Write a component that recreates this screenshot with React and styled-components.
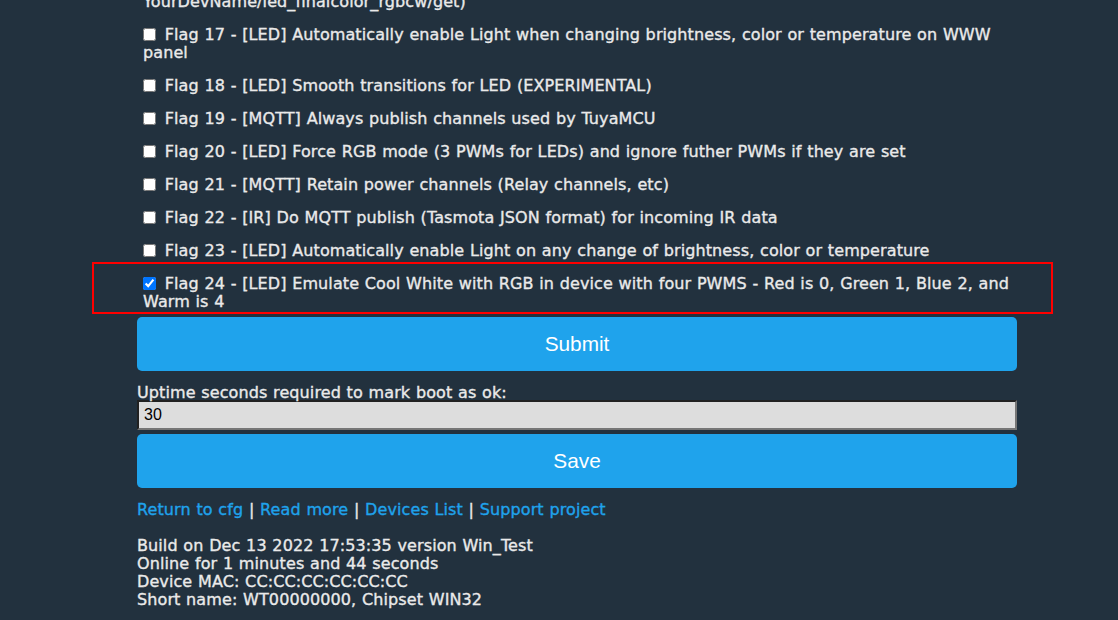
import React from 'react'
import styled, { createGlobalStyle } from 'styled-components'

const GlobalStyle = createGlobalStyle`
    body {
        margin: 0;
        background: #22313e;
        color: #eaeaea;
        font-family: "DejaVu Sans", Verdana, sans-serif;
        font-size: 16px;
    }
`;

const Page = styled.div`
    width: 880px;
    margin: -27px 0 0 137px;
    line-height: 18px;
    letter-spacing: 0.1px;
    word-spacing: 0.5px;
    -webkit-text-stroke: 0.35px currentColor;
`;

const FlagRow = styled.label`
    display: block;
    position: relative;
    padding: 2px 0 0 6px;
    margin-bottom: 13px;

    &:last-of-type {
        margin-bottom: 6px;
    }
`;

const Check = styled.input.attrs({ type: 'checkbox' })`
    width: 13px;
    height: 13px;
    margin: 0 3px 0 0;
    vertical-align: -1px;
`;

const Highlight = styled.span`
    position: absolute;
    top: -11px;
    left: -45px;
    width: 961px;
    height: 52px;
    box-sizing: border-box;
    border: 2px solid #ff0000;
    pointer-events: none;
`;

const ActionButton = styled.button`
    display: block;
    width: 100%;
    height: 54px;
    margin-top: ${props => props.$gap || 0}px;
    border: 0;
    border-radius: 5px;
    background: #1fa3ec;
    color: #fff;
    font-family: "Liberation Sans", Arial, sans-serif;
    font-size: 20.8px;
    letter-spacing: 0;
    word-spacing: 0;
    -webkit-text-stroke: 0;
    cursor: pointer;
`;

const FieldLabel = styled.label`
    display: block;
    height: 18px;
    box-sizing: border-box;
    margin-top: 11px;
    padding-top: 2px;
`;

const TextInput = styled.input`
    display: block;
    width: 100%;
    height: 30px;
    box-sizing: border-box;
    padding: 4px 5px;
    border: 2px inset #767676;
    background: #ddd;
    color: #000;
    font-family: "Liberation Sans", Arial, sans-serif;
    font-size: 16px;
    letter-spacing: 0;
    word-spacing: 0;
    -webkit-text-stroke: 0;
`;

const NavLine = styled.div`
    margin-top: 13px;
`;

const NavLink = styled.a`
    color: #1fa3ec;
    text-decoration: none;
`;

const Info = styled.div`
    margin-top: 18px;
`;

const flags = [
    { id: 16, text: '[LED] Send led_finalcolor_rgbcw via MQTT when color changes (it will be published to', tail: 'YourDevName/led_finalcolor_rgbcw/get)' },
    { id: 17, text: '[LED] Automatically enable Light when changing brightness, color or temperature on WWW panel' },
    { id: 18, text: '[LED] Smooth transitions for LED (EXPERIMENTAL)' },
    { id: 19, text: '[MQTT] Always publish channels used by TuyaMCU' },
    { id: 20, text: '[LED] Force RGB mode (3 PWMs for LEDs) and ignore futher PWMs if they are set' },
    { id: 21, text: '[MQTT] Retain power channels (Relay channels, etc)' },
    { id: 22, text: '[IR] Do MQTT publish (Tasmota JSON format) for incoming IR data' },
    { id: 23, text: '[LED] Automatically enable Light on any change of brightness, color or temperature' },
    { id: 24, text: '[LED] Emulate Cool White with RGB in device with four PWMS - Red is 0, Green 1, Blue 2, and Warm is 4', checked: true, marked: true },
];

const links = ['Return to cfg', 'Read more', 'Devices List', 'Support project'];

const App = () => {
    return (
        <>
            <GlobalStyle />
            <Page>
                <form onSubmit={e => e.preventDefault()}>
                    {flags.map(f => (
                        <FlagRow key={f.id}>
                            <Check defaultChecked={!!f.checked} /> Flag {f.id} - {f.text}
                            {f.tail && <><br />{f.tail}</>}
                            {f.marked && <Highlight />}
                        </FlagRow>
                    ))}
                    <ActionButton type='submit'>Submit</ActionButton>
                </form>
                <FieldLabel htmlFor='boot-ok'>Uptime seconds required to mark boot as ok:</FieldLabel>
                <TextInput id='boot-ok' defaultValue='30' />
                <ActionButton $gap={4}>Save</ActionButton>
                <NavLine>
                    {links.map((l, i) => (
                        <React.Fragment key={l}>
                            {i > 0 && ' | '}
                            <NavLink href='#'>{l}</NavLink>
                        </React.Fragment>
                    ))}
                </NavLine>
                <Info>
                    Build on Dec 13 2022 17:53:35 version Win_Test<br />
                    Online for 1 minutes and 44 seconds<br />
                    Device MAC: CC:CC:CC:CC:CC:CC<br />
                    Short name: WT00000000, Chipset WIN32
                </Info>
            </Page>
        </>
    )
}

export default App;
